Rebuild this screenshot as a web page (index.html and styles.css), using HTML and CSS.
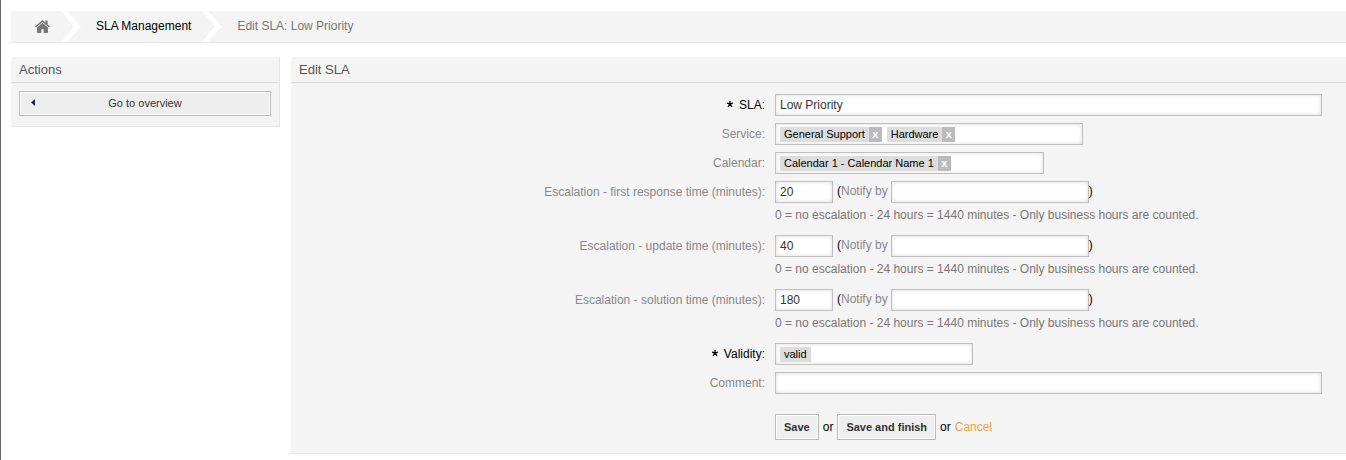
FILE: index.html
```html
<!DOCTYPE html>
<html lang="en">
<head>
<meta charset="utf-8">
<title>Edit SLA</title>
<link rel="stylesheet" href="styles.css">
</head>
<body>
<div class="page">
  <nav class="breadcrumb" aria-label="Breadcrumb">
    <a class="crumb-home" href="#" aria-label="Home"><svg class="home-icon" viewBox="0 0 14 12" aria-hidden="true"><path d="M7 0 0 6l.9 1L7 1.900 13.100 7 14 6 11.800 4.100V.5H9.700v1.800z"/><path d="M7 2.600 1.900 6.900v4.300c0 .5.300.8.800.8h3.200V8.500h2.200V12h3.200c.5 0 .8-.3.800-.8V6.900z"/></svg></a>
    <svg class="chevron" viewBox="0 0 20 31" aria-hidden="true"><path d="M0 0h6l14 15.500L6 31H0l13-15.500z"/></svg>
    <a class="crumb" href="#">SLA Management</a>
    <svg class="chevron" viewBox="0 0 20 31" aria-hidden="true"><path d="M0 0h6l14 15.500L6 31H0l13-15.500z"/></svg>
    <span class="crumb current">Edit SLA: Low Priority</span>
  </nav>
  <div class="columns">
    <aside class="panel sidebar">
      <h2 class="panel-title">Actions</h2>
      <div class="panel-body">
        <button class="btn-wide" type="button"><svg class="caret" viewBox="0 0 4 7" aria-hidden="true"><path d="M4 0v7L0 3.500z"/></svg>Go to overview</button>
      </div>
    </aside>
    <main class="panel content">
      <h2 class="panel-title">Edit SLA</h2>
      <form class="form">
        <label class="label required" for="sla"><svg class="star" viewBox="0 0 6 8" aria-hidden="true"><path d="M3 0v3M0 2.200 3 3l3-.8M1 6l2-3 2 3"/></svg>SLA:</label>
        <input class="input" id="sla" type="text" value="Low Priority">

        <label class="label" for="service">Service:</label>
        <div class="tagbox service"><span class="tag">General Support<button class="remove" type="button" aria-label="Remove General Support">x</button></span><span class="tag">Hardware<button class="remove" type="button" aria-label="Remove Hardware">x</button></span><input class="search" id="service" type="text"></div>

        <label class="label" for="calendar">Calendar:</label>
        <div class="tagbox calendar"><span class="tag">Calendar 1 - Calendar Name 1<button class="remove" type="button" aria-label="Remove Calendar 1">x</button></span><input class="search" id="calendar" type="text"></div>

        <label class="label" for="first">Escalation - first response time (minutes):</label>
        <div>
          <div class="line"><input class="input minutes" id="first" type="text" value="20"><span class="paren">(<label class="muted" for="first-notify">Notify by</label></span><input class="input notify" id="first-notify" type="text"><span>)</span></div>
          <p class="hint">0 = no escalation - 24 hours = 1440 minutes - Only business hours are counted.</p>
        </div>

        <label class="label" for="update">Escalation - update time (minutes):</label>
        <div>
          <div class="line"><input class="input minutes" id="update" type="text" value="40"><span class="paren">(<label class="muted" for="update-notify">Notify by</label></span><input class="input notify" id="update-notify" type="text"><span>)</span></div>
          <p class="hint">0 = no escalation - 24 hours = 1440 minutes - Only business hours are counted.</p>
        </div>

        <label class="label" for="solution">Escalation - solution time (minutes):</label>
        <div>
          <div class="line"><input class="input minutes" id="solution" type="text" value="180"><span class="paren">(<label class="muted" for="solution-notify">Notify by</label></span><input class="input notify" id="solution-notify" type="text"><span>)</span></div>
          <p class="hint">0 = no escalation - 24 hours = 1440 minutes - Only business hours are counted.</p>
        </div>

        <label class="label required" for="validity"><svg class="star" viewBox="0 0 6 8" aria-hidden="true"><path d="M3 0v3M0 2.200 3 3l3-.8M1 6l2-3 2 3"/></svg>Validity:</label>
        <div class="tagbox validity"><span class="tag plain">valid</span><input class="search" id="validity" type="text"></div>

        <label class="label" for="comment">Comment:</label>
        <input class="input" id="comment" type="text">

        <div class="actions"><button class="btn" type="submit">Save</button><span>or</span><button class="btn" type="submit">Save and finish</button><span>or</span><a class="cancel" href="#">Cancel</a></div>
      </form>
    </main>
  </div>
</div>
</body>
</html>
```
FILE: styles.css
```css
* { box-sizing: border-box; }

body {
  margin: 0;
  background: #fff;
  color: #000;
  font: 12px/16px "Liberation Sans", Arial, sans-serif;
}

a { text-decoration: none; }

.page {
  min-height: 100vh;
  padding: 11px 0 6px 10px;
  border-left: 1px solid #666;
}

.breadcrumb {
  display: flex;
  height: 32px;
  background: #f4f4f4;
  border-bottom: 1px solid #e6e6e6;
}

.crumb-home {
  display: flex;
  align-items: center;
  width: 50px;
  padding-left: 24px;
}

.home-icon { width: 15px; height: 13px; fill: #777; }
.chevron { width: 20px; height: 31px; fill: #fff; }

.crumb {
  padding: 7px 11px 0 15px;
  color: #000;
}

.crumb.current { color: #777; }

.columns {
  display: flex;
  align-items: flex-start;
  gap: 11px;
  margin-top: 14px;
}

.panel {
  background: #f4f4f4;
  border-bottom: 1px solid #e6e6e6;
}

.sidebar {
  flex: none;
  width: 269px;
  border-right: 1px solid #e6e6e6;
}

.content { flex: 1; min-width: 0; }

.panel-title {
  height: 26px;
  margin: 0;
  padding: 5px 8px 0;
  border-bottom: 1px solid #dadada;
  color: #555;
  font-size: 13px;
  font-weight: 400;
}

.panel-body { padding: 8px 8px 10px; }

.btn-wide,
.btn {
  border: 1px solid #bbb;
  background: #eee;
  box-shadow: inset 0 0 0 1px #fff;
  color: #333;
  font: 11px/16px "Liberation Sans", Arial, sans-serif;
}

.btn-wide {
  display: flex;
  align-items: center;
  justify-content: center;
  position: relative;
  width: 100%;
  height: 25px;
  padding: 0 0 2px;
}

.caret {
  position: absolute;
  left: 11px;
  width: 4px;
  height: 7px;
  fill: #226;
}

.form {
  display: grid;
  grid-template-columns: minmax(0, 464fr) minmax(0, 547fr);
  gap: 7px 10px;
  padding: 11px 24px 13px 10px;
}

.label {
  padding-top: 3px;
  color: #888;
  text-align: right;
}

.label.required { color: #000; }

.star {
  width: 6px;
  height: 8px;
  margin-right: 6px;
  fill: none;
  stroke: #000;
  stroke-width: 1.300;
}

.input,
.tagbox {
  width: 100%;
  height: 22px;
  border: 1px solid #bfbfbf;
  background: #fff;
  box-shadow: inset 0 0 4px #ddd;
}

.input {
  padding: 0 4px;
  color: #333;
  font: 12px/16px "Liberation Sans", Arial, sans-serif;
}

.tagbox {
  display: flex;
  align-items: flex-start;
  gap: 5px;
  padding: 3px 4px;
}

.service { width: 308px; }
.calendar { width: 269px; }
.validity { width: 198px; }

.tag {
  display: flex;
  flex: none;
  gap: 4px;
  height: 15px;
  padding-left: 4px;
  background: #ddd;
  font-size: 11px;
  line-height: 15px;
}

.tag.plain { padding-right: 4px; }

.remove {
  width: 13px;
  height: 15px;
  padding: 0;
  border: 0;
  background: #bbb;
  color: #fff;
  font: bold 11px/15px "Liberation Sans", Arial, sans-serif;
}

.search {
  flex: 1;
  min-width: 0;
  height: 14px;
  padding: 0;
  border: 0;
  background: transparent;
}

.line { display: flex; line-height: 21px; }
.input.minutes { width: 58px; }
.input.notify { width: 198px; }
.paren { padding: 0 3px 0 4px; }
.muted { color: #888; }

.hint {
  margin: 0;
  padding: 4px 0 5px;
  color: #777;
}

.actions {
  display: flex;
  grid-column: 2;
  align-items: center;
  gap: 4px;
  margin-top: 13px;
}

.btn {
  height: 26px;
  padding: 0 8px;
  font-weight: 700;
}

.cancel { color: #ff9b38; }
```
